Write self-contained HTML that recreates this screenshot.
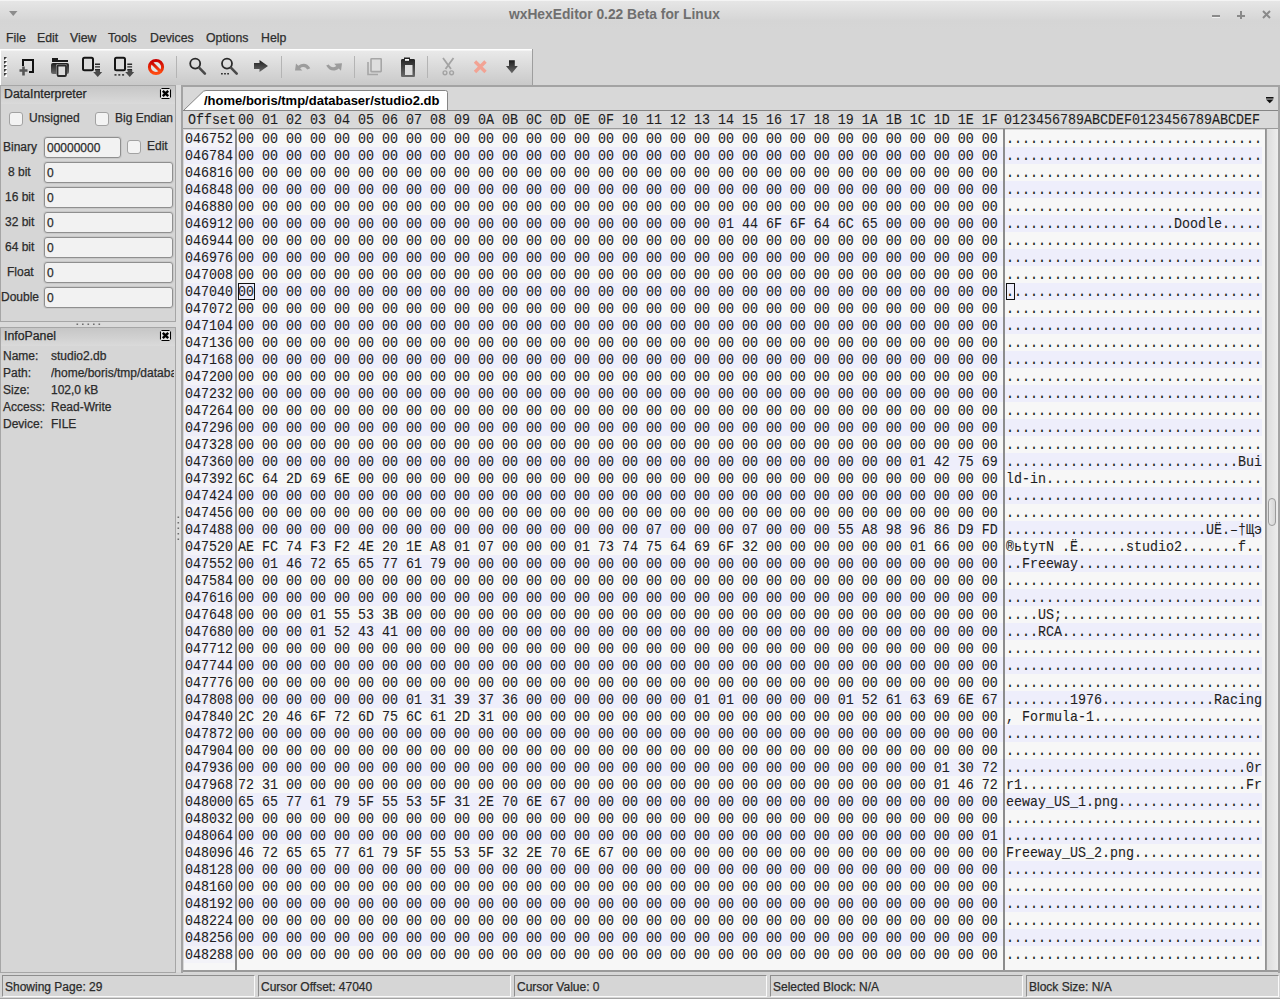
<!DOCTYPE html>
<html><head><meta charset="utf-8"><title>wxHexEditor</title>
<style>
*{margin:0;padding:0;box-sizing:border-box}
html,body{width:1280px;height:999px;overflow:hidden;background:#d6d6d6;font-family:"Liberation Sans",sans-serif;font-size:12px;color:#2b2b2b}
.a{position:absolute}
#title{left:0;top:0;width:1280px;height:29px;background:linear-gradient(#f4f4f4 0,#f4f4f4 1px,#e6e6e6 1px,#d5d5d5 21px,#d6d6d6 29px)}
#title .t{left:509px;top:7px;white-space:nowrap;font-weight:bold;font-size:13.8px;color:#6f6f6f;padding-left:-0px}
#menubar{left:0;top:29px;width:1280px;height:20px}
#menubar span{position:absolute;top:2px;font-size:12.3px;color:#2e2e2e}
#toolbar{left:0;top:49px;width:533px;height:36px;background:linear-gradient(#ffffff 0,#ffffff 1px,#e9e9e9 2px,#cacaca 35px);border-right:1px solid #9e9e9e;border-left:1px solid #ffffff}
.sep{position:absolute;top:7px;width:1px;height:22px;background:#b8b8b8}
/* left panel */
#lp1{left:0;top:85px;width:176px;height:237px;border:1px solid #a6a6a6;background:#d6d6d6}
#hsash{left:0;top:322px;width:176px;height:5px;background:#dadada}
#lp2{left:0;top:327px;width:176px;height:646px;border:1px solid #a6a6a6;background:#d6d6d6}
.ph2{background:linear-gradient(#bdbdbd,#cdcdcd)}
.ph{position:absolute;left:0;width:174px;height:18px;background:linear-gradient(#c6c6c6,#dadada)}
.ph span{position:absolute;left:3px;top:1px;font-size:12.3px;color:#262626}
.cls{position:absolute;width:12px;height:12px;border:1.5px solid #1a1a1a;border-radius:2px;background:#ececec}
.cb{position:absolute;width:14px;height:14px;border:1px solid #a2a2a2;border-radius:3px;background:#f3f3f3}
.lbl{position:absolute;font-size:12px;color:#2b2b2b}
.inp{position:absolute;height:21px;border:1px solid #8f8f8f;border-radius:3px;background:#f2f2f2;box-shadow:0 0 0 1px #c9c9c9}
.inp span{position:absolute;left:2px;top:3px;font-size:12px;color:#2b2b2b}
#sash{left:176px;top:85px;width:6px;height:887px;background:#dcdcdc;border-right:1px solid #9e9e9e}
/* notebook */
#nb{left:181px;top:85px;width:1099px;height:888px;border:2px solid #a3a3a3;border-bottom:0;background:#d8d8d8}
#tab{left:204px;top:90px;width:244px;height:21px;background:#ffffff;border-top:1px solid #8e8e8e;border-right:1px solid #8e8e8e;border-top-right-radius:3px}
#tabtxt{left:204px;top:92.7px;font-weight:bold;font-size:13px;color:#000}
#tabline{left:183px;top:110px;width:1095px;height:1px;background:#858585}
#hdr{left:183px;top:111px;width:1095px;height:18px;background:#d9d9d9;border-bottom:1px solid #9a9a9a}
.mono{font-family:"Liberation Mono",monospace;font-size:13.33px;color:#1e1e1e;white-space:pre;line-height:17px}
#goff{left:184px;top:130px;width:51px;height:841px;background:#f7f7f7;overflow:hidden}
#ghex{left:237px;top:130px;width:767px;height:841px;background:#f7f7f7;overflow:hidden}
#gtxt{left:1005px;top:130px;width:260px;height:841px;background:#f7f7f7;overflow:hidden}
.r{height:17px}
.bgl{position:absolute;left:0;top:0;width:100%}
.txl{position:absolute;left:1px;top:1px;width:100%;height:100%}
.tl{position:absolute;left:0;line-height:15.315px;height:15.315px;transform:scaleY(1.11);transform-origin:0 0;white-space:pre}
.r.alt{background:#eeeefb}
#vsep1{left:235px;top:129px;width:2px;height:841px;background:#8c8c8c}
#vsep2{left:1003px;top:129px;width:2px;height:841px;background:#8c8c8c}
#vsep3{left:1265px;top:129px;width:2px;height:841px;background:linear-gradient(90deg,#8c8c8c,#a4a4a4)}
#gbot{left:183px;top:970px;width:1095px;height:2px;background:#9a9a9a}
#scroll{left:1267px;top:129px;width:11px;height:841px;background:linear-gradient(90deg,#dcdcdc,#ececec)}
#thumb{left:1268px;top:498px;width:8px;height:28px;border:1px solid #9a9a9a;border-radius:4px;background:linear-gradient(90deg,#e8e8e8,#d6d6d6)}
#cur1{left:238px;top:283px;width:17px;height:17px;border:1px solid #111}
#cur2{left:1006px;top:283px;width:9px;height:17px;border:1px solid #111}
/* status */
.sf{position:absolute;top:975px;height:22px;border-top:1px solid #8e8e8e;border-left:1px solid #8e8e8e;border-bottom:1px solid #fafafa;border-right:1px solid #fafafa;background:#d6d6d6}
.sf span{position:absolute;left:2px;top:3.5px;font-size:12px;color:#2b2b2b}

#sbot{left:0;top:998px;width:1280px;height:1px;background:#a3a3a3}

#gtxt .bgl{width:257px}
#goff .r{background:#f3f3f8}
#goff .r.alt{background:#eeeef9}

#menubar span,.lbl,.ph span,.sf span,.inp span{-webkit-text-stroke:0.25px currentColor}

.txl,#hdr span{-webkit-text-stroke:0.1px #1e1e1e}

</style></head><body>
<div id="title" class="a">
 <svg class="a" style="left:9px;top:11px" width="9" height="6"><path d="M0 0h8.5L4.25 5z" fill="#8c8c8c"/></svg>
 <div class="a t">wxHexEditor 0.22 Beta for Linux</div>
 <svg class="a" style="left:1208px;top:8px" width="70" height="14">
  <rect x="4" y="7" width="8" height="2" fill="#8a8a8a"/><rect x="4" y="9" width="8" height="1" fill="#f0f0f0"/>
  <rect x="29" y="7" width="8" height="2" fill="#8a8a8a"/><rect x="32" y="3" width="2" height="8" fill="#8a8a8a"/>
  <path d="M55 3l7 7M62 3l-7 7" stroke="#8a8a8a" stroke-width="2"/>
 </svg>
</div>
<div id="menubar" class="a">
 <span style="left:6px">File</span><span style="left:37px">Edit</span><span style="left:70px">View</span><span style="left:108px">Tools</span><span style="left:150px">Devices</span><span style="left:206px">Options</span><span style="left:261px">Help</span>
</div>
<div id="toolbar" class="a">
 <svg class="a" style="left:-1px;top:0" width="533" height="36" viewBox="0 49 533 36">
 <defs>
  <linearGradient id="gd" x1="0" y1="0" x2="0" y2="1"><stop offset="0" stop-color="#1e1e1e"/><stop offset="1" stop-color="#6a6a6a"/></linearGradient>
  <linearGradient id="gred" x1="0" y1="0" x2="0" y2="1"><stop offset="0" stop-color="#c80000"/><stop offset="1" stop-color="#ff4a10"/></linearGradient>
 </defs>
 <!-- gripper -->
 <g fill="#3a3a3a"><path d="M4 57h3l-3 3z M4 61h3l-3 3z M4 65h3l-3 3z M4 69h3l-3 3z M4 73h3l-3 3z"/></g>
 <g fill="#ffffff"><path d="M7 58v3h-3z M7 62v3h-3z M7 66v3h-3z M7 70v3h-3z M7 74v3h-3z"/></g>
 <!-- new -->
 <path d="M23 66V60h10v12h-4" fill="none" stroke="#111" stroke-width="2"/>
 <path d="M19.5 70.5h8M23.5 66.5v9" stroke="#555" stroke-width="2.6"/>
 <!-- open -->
 <path d="M52 58h6v2h10v2H52z" fill="#1a1a1a"/>
 <rect x="51" y="63" width="18" height="11" rx="2" fill="url(#gd)"/>
 <rect x="56.5" y="64.5" width="10" height="12" fill="#ffffff"/>
 <rect x="57.5" y="65.5" width="8.5" height="10.5" rx="1" fill="#dcdcdc" stroke="#2a2a2a" stroke-width="1.8"/>
 <!-- save -->
 <rect x="83" y="57.8" width="10" height="12.4" rx="1.5" fill="#dcdcdc" stroke="#151515" stroke-width="2"/>
 <path d="M95 64.3h5M95 66.9h5M95 69.8h5" stroke="#2a2a2a" stroke-width="1.4"/>
 <path d="M95.5 70h4.5v2h2.2l-4.45 5l-4.55-5h2.3z" fill="#4a4a4a"/>
 <!-- save as -->
 <rect x="115" y="57.8" width="10" height="12.4" rx="1.5" fill="#dcdcdc" stroke="#151515" stroke-width="2"/>
 <path d="M127.3 64.3h4.8M127.3 66.9h4.8M127.3 69.8h4.8" stroke="#2a2a2a" stroke-width="1.4"/>
 <path d="M127.7 70h4.5v2h2l-4.45 5l-4.55-5h2.5z" fill="#4a4a4a"/>
 <path d="M114.5 74h2v1.8h-2zM118.3 74h2v1.8h-2zM122.1 74h2v1.8h-2z" fill="#444"/>
 <!-- stop -->
 <circle cx="156" cy="67" r="6.6" fill="#dfe6e6" stroke="url(#gred)" stroke-width="3"/>
 <path d="M151.2 62.2l9.6 9.6" stroke="url(#gred)" stroke-width="3"/>
 <!-- seps -->
 <rect x="176" y="56" width="1" height="22" fill="#b4b4b4"/>
 <rect x="281" y="56" width="1" height="22" fill="#b4b4b4"/>
 <rect x="354" y="56" width="1" height="22" fill="#b4b4b4"/>
 <rect x="427" y="56" width="1" height="22" fill="#b4b4b4"/>
 <!-- find -->
 <circle cx="195.2" cy="63.6" r="5" fill="none" stroke="#2a2a2a" stroke-width="1.8"/>
 <path d="M199.3 67.8l5.6 5.8" stroke="#4a4a4a" stroke-width="2.6" stroke-linecap="round"/>
 <!-- find replace -->
 <circle cx="227" cy="63.6" r="5" fill="none" stroke="#2a2a2a" stroke-width="1.8"/>
 <path d="M231.1 67.8l5.6 5.8" stroke="#4a4a4a" stroke-width="2.6" stroke-linecap="round"/>
 <path d="M221 73h1.8v1.6H221zM224.1 73h1.8v1.6h-1.8zM227.2 73h1.8v1.6h-1.8z" fill="#333"/>
 <!-- goto -->
 <path d="M254 63h5.5v-3l8.5 6l-8.5 6v-3H254z" fill="url(#gd)"/>
 <!-- undo -->
 <path d="M295 70.5l1-7l2.3 2.3c4-3.3 9-3 12 2.5l-3 1.2c-2-3-5-3.2-7.2-1.2l2.2 2.2z" fill="#9c9c9c"/>
 <!-- redo -->
 <path d="M342 63.2l-1 7.5l-2.3-2.3c-4 3.3-9 3-12.5-3l2.5-0.8c2.2 3 5.2 3.2 7.6 1.3l-2.1-2.1z" fill="#9c9c9c"/>
 <!-- copy -->
 <path d="M368 62v12.5h10" fill="none" stroke="#a6a6a6" stroke-width="1.6"/>
 <rect x="371" y="58.8" width="10.2" height="12.8" rx="0.5" fill="#dedede" stroke="#a6a6a6" stroke-width="1.6"/>
 <!-- paste -->
 <path d="M401 60.5c0-1 0.6-1.5 1.5-1.5h1.5v-1.5h6v1.5h3.5c1 0 1.5 0.5 1.5 1.5v15c0 1-0.5 1.5-1.5 1.5h-11c-1 0-1.5-0.5-1.5-1.5z" fill="url(#gd)"/>
 <rect x="405" y="59" width="4" height="1.8" fill="#ffffff"/>
 <rect x="405" y="65" width="7.5" height="10" fill="#dedede"/>
 <!-- cut -->
 <path d="M443 58l8 11M453.5 58l-8 11" stroke="#a3a3a3" stroke-width="1.8"/>
 <circle cx="445" cy="72.8" r="1.9" fill="none" stroke="#a3a3a3" stroke-width="1.4"/>
 <circle cx="451.6" cy="72.8" r="1.9" fill="none" stroke="#a3a3a3" stroke-width="1.4"/>
 <!-- delete -->
 <path d="M475 61.5l10.5 10.5M485.5 61.5l-10.5 10.5" stroke="#f2a394" stroke-width="3.4"/>
 <!-- insert -->
 <path d="M509 60.3h5.8v5.6h3l-5.9 7.4l-5.9-7.4h3z" fill="url(#gd)"/>
</svg>

</div>
<div id="lp1" class="a">
 <div class="ph" style="top:0"><span>DataInterpreter</span><svg class="a" style="left:158px;top:1px" width="13" height="13" viewBox="0 0 13 13"><path d="M2.5 1.5h8M2.5 11.5h8M1.5 2.5v8M11.5 2.5v8" stroke="#000" stroke-width="1.1"/><rect x="2" y="2" width="9" height="9" fill="#e4e4e4"/><path d="M3.8 3.8l5.4 5.4M9.2 3.8l-5.4 5.4" stroke="#000" stroke-width="2.4"/></svg></div>
 <div class="cb" style="left:8px;top:26px"></div><div class="lbl" style="left:28px;top:25px">Unsigned</div>
 <div class="cb" style="left:94px;top:26px"></div><div class="lbl" style="left:114px;top:25px">Big Endian</div>
 <div class="lbl" style="left:2px;top:54px">Binary</div>
 <div class="inp" style="left:43px;top:51px;width:77px"><span>00000000</span></div>
 <div class="cb" style="left:126px;top:54px"></div><div class="lbl" style="left:146px;top:53px">Edit</div>
 <div class="lbl" style="left:7px;top:79px">8 bit</div><div class="inp" style="left:43px;top:76px;width:129px"><span>0</span></div>
 <div class="lbl" style="left:4px;top:104px">16 bit</div><div class="inp" style="left:43px;top:101px;width:129px"><span>0</span></div>
 <div class="lbl" style="left:4px;top:129px">32 bit</div><div class="inp" style="left:43px;top:126px;width:129px"><span>0</span></div>
 <div class="lbl" style="left:4px;top:154px">64 bit</div><div class="inp" style="left:43px;top:151px;width:129px"><span>0</span></div>
 <div class="lbl" style="left:6px;top:179px">Float</div><div class="inp" style="left:43px;top:176px;width:129px"><span>0</span></div>
 <div class="lbl" style="left:0px;top:204px">Double</div><div class="inp" style="left:43px;top:201px;width:129px"><span>0</span></div>
</div>
<div id="hsash" class="a"><svg class="a" style="left:76px;top:1px" width="25" height="3"><path d="M0.5 0.5h1.6v1.6H0.5zM6 0.5h1.6v1.6H6zM11.5 0.5h1.6v1.6h-1.6zM17 0.5h1.6v1.6H17zM22.5 0.5h1.6v1.6h-1.6z" fill="#6e6e6e"/></svg></div>
<div id="lp2" class="a">
 <div class="ph ph2" style="top:0"><span>InfoPanel</span><svg class="a" style="left:158px;top:1px" width="13" height="13" viewBox="0 0 13 13"><path d="M2.5 1.5h8M2.5 11.5h8M1.5 2.5v8M11.5 2.5v8" stroke="#000" stroke-width="1.1"/><rect x="2" y="2" width="9" height="9" fill="#e4e4e4"/><path d="M3.8 3.8l5.4 5.4M9.2 3.8l-5.4 5.4" stroke="#000" stroke-width="2.4"/></svg></div>
 <div class="lbl" style="left:2px;top:21px">Name:</div><div class="lbl" style="left:50px;top:21px">studio2.db</div>
 <div class="lbl" style="left:2px;top:38px">Path:</div><div class="lbl" style="left:50px;top:38px;width:123px;overflow:hidden;white-space:nowrap">/home/boris/tmp/databaser/studio2.db</div>
 <div class="lbl" style="left:2px;top:55px">Size:</div><div class="lbl" style="left:50px;top:55px">102,0 kB</div>
 <div class="lbl" style="left:2px;top:72px">Access:</div><div class="lbl" style="left:50px;top:72px">Read-Write</div>
 <div class="lbl" style="left:2px;top:89px">Device:</div><div class="lbl" style="left:50px;top:89px">FILE</div>
</div>
<div id="sash" class="a"><svg class="a" style="left:1px;top:431px" width="3" height="25"><path d="M0.5 0.5h1.6v1.6H0.5zM0.5 6h1.6v1.6H0.5zM0.5 11.5h1.6v1.6H0.5zM0.5 17h1.6v1.6H0.5zM0.5 22.5h1.6v1.6H0.5z" fill="#6e6e6e"/></svg></div>
<div id="nb" class="a"></div>
<svg class="a" style="left:182px;top:88px" width="270" height="24" viewBox="182 88 270 24"><path d="M183.5 110.5L203.5 91.2l2.5-0.7H445.5a2 2 0 0 1 2 2V110.5" fill="#ffffff" stroke="#858585" stroke-width="1"/></svg>
<div id="tabline" class="a"></div>
<div id="tabtxt" class="a">/home/boris/tmp/databaser/studio2.db</div>
<svg class="a" style="left:1265px;top:96px" width="10" height="8" viewBox="0 0 10 8"><rect x="1" y="1" width="7.5" height="1.6" fill="#111"/><path d="M1 3.5h7.5L4.75 7.2z" fill="#111"/></svg>
<div id="hdr" class="a mono"><div class="a" style="left:0;top:1px;line-height:15.315px;transform:scaleY(1.11);transform-origin:0 0;width:1095px"><span class="a" style="left:5px;top:0">Offset</span><span class="a" style="left:55px;top:0">00 01 02 03 04 05 06 07 08 09 0A 0B 0C 0D 0E 0F 10 11 12 13 14 15 16 17 18 19 1A 1B 1C 1D 1E 1F</span><span class="a" style="left:821px;top:0">0123456789ABCDEF0123456789ABCDEF</span></div></div>
<div id="goff" class="a mono"><div class="bgl"><div class="r"></div><div class="r alt"></div><div class="r"></div><div class="r alt"></div><div class="r"></div><div class="r alt"></div><div class="r"></div><div class="r alt"></div><div class="r"></div><div class="r alt"></div><div class="r"></div><div class="r alt"></div><div class="r"></div><div class="r alt"></div><div class="r"></div><div class="r alt"></div><div class="r"></div><div class="r alt"></div><div class="r"></div><div class="r alt"></div><div class="r"></div><div class="r alt"></div><div class="r"></div><div class="r alt"></div><div class="r"></div><div class="r alt"></div><div class="r"></div><div class="r alt"></div><div class="r"></div><div class="r alt"></div><div class="r"></div><div class="r alt"></div><div class="r"></div><div class="r alt"></div><div class="r"></div><div class="r alt"></div><div class="r"></div><div class="r alt"></div><div class="r"></div><div class="r alt"></div><div class="r"></div><div class="r alt"></div><div class="r"></div><div class="r alt"></div><div class="r"></div><div class="r alt"></div><div class="r"></div><div class="r alt"></div><div class="r"></div></div><div class="txl"><div class="tl" style="top:0px">046752</div><div class="tl" style="top:17px">046784</div><div class="tl" style="top:34px">046816</div><div class="tl" style="top:51px">046848</div><div class="tl" style="top:68px">046880</div><div class="tl" style="top:85px">046912</div><div class="tl" style="top:102px">046944</div><div class="tl" style="top:119px">046976</div><div class="tl" style="top:136px">047008</div><div class="tl" style="top:153px">047040</div><div class="tl" style="top:170px">047072</div><div class="tl" style="top:187px">047104</div><div class="tl" style="top:204px">047136</div><div class="tl" style="top:221px">047168</div><div class="tl" style="top:238px">047200</div><div class="tl" style="top:255px">047232</div><div class="tl" style="top:272px">047264</div><div class="tl" style="top:289px">047296</div><div class="tl" style="top:306px">047328</div><div class="tl" style="top:323px">047360</div><div class="tl" style="top:340px">047392</div><div class="tl" style="top:357px">047424</div><div class="tl" style="top:374px">047456</div><div class="tl" style="top:391px">047488</div><div class="tl" style="top:408px">047520</div><div class="tl" style="top:425px">047552</div><div class="tl" style="top:442px">047584</div><div class="tl" style="top:459px">047616</div><div class="tl" style="top:476px">047648</div><div class="tl" style="top:493px">047680</div><div class="tl" style="top:510px">047712</div><div class="tl" style="top:527px">047744</div><div class="tl" style="top:544px">047776</div><div class="tl" style="top:561px">047808</div><div class="tl" style="top:578px">047840</div><div class="tl" style="top:595px">047872</div><div class="tl" style="top:612px">047904</div><div class="tl" style="top:629px">047936</div><div class="tl" style="top:646px">047968</div><div class="tl" style="top:663px">048000</div><div class="tl" style="top:680px">048032</div><div class="tl" style="top:697px">048064</div><div class="tl" style="top:714px">048096</div><div class="tl" style="top:731px">048128</div><div class="tl" style="top:748px">048160</div><div class="tl" style="top:765px">048192</div><div class="tl" style="top:782px">048224</div><div class="tl" style="top:799px">048256</div><div class="tl" style="top:816px">048288</div></div></div>
<div id="ghex" class="a mono"><div class="bgl"><div class="r"></div><div class="r alt"></div><div class="r"></div><div class="r alt"></div><div class="r"></div><div class="r alt"></div><div class="r"></div><div class="r alt"></div><div class="r"></div><div class="r alt"></div><div class="r"></div><div class="r alt"></div><div class="r"></div><div class="r alt"></div><div class="r"></div><div class="r alt"></div><div class="r"></div><div class="r alt"></div><div class="r"></div><div class="r alt"></div><div class="r"></div><div class="r alt"></div><div class="r"></div><div class="r alt"></div><div class="r"></div><div class="r alt"></div><div class="r"></div><div class="r alt"></div><div class="r"></div><div class="r alt"></div><div class="r"></div><div class="r alt"></div><div class="r"></div><div class="r alt"></div><div class="r"></div><div class="r alt"></div><div class="r"></div><div class="r alt"></div><div class="r"></div><div class="r alt"></div><div class="r"></div><div class="r alt"></div><div class="r"></div><div class="r alt"></div><div class="r"></div><div class="r alt"></div><div class="r"></div><div class="r alt"></div><div class="r"></div></div><div class="txl"><div class="tl" style="top:0px">00 00 00 00 00 00 00 00 00 00 00 00 00 00 00 00 00 00 00 00 00 00 00 00 00 00 00 00 00 00 00 00</div><div class="tl" style="top:17px">00 00 00 00 00 00 00 00 00 00 00 00 00 00 00 00 00 00 00 00 00 00 00 00 00 00 00 00 00 00 00 00</div><div class="tl" style="top:34px">00 00 00 00 00 00 00 00 00 00 00 00 00 00 00 00 00 00 00 00 00 00 00 00 00 00 00 00 00 00 00 00</div><div class="tl" style="top:51px">00 00 00 00 00 00 00 00 00 00 00 00 00 00 00 00 00 00 00 00 00 00 00 00 00 00 00 00 00 00 00 00</div><div class="tl" style="top:68px">00 00 00 00 00 00 00 00 00 00 00 00 00 00 00 00 00 00 00 00 00 00 00 00 00 00 00 00 00 00 00 00</div><div class="tl" style="top:85px">00 00 00 00 00 00 00 00 00 00 00 00 00 00 00 00 00 00 00 00 01 44 6F 6F 64 6C 65 00 00 00 00 00</div><div class="tl" style="top:102px">00 00 00 00 00 00 00 00 00 00 00 00 00 00 00 00 00 00 00 00 00 00 00 00 00 00 00 00 00 00 00 00</div><div class="tl" style="top:119px">00 00 00 00 00 00 00 00 00 00 00 00 00 00 00 00 00 00 00 00 00 00 00 00 00 00 00 00 00 00 00 00</div><div class="tl" style="top:136px">00 00 00 00 00 00 00 00 00 00 00 00 00 00 00 00 00 00 00 00 00 00 00 00 00 00 00 00 00 00 00 00</div><div class="tl" style="top:153px">00 00 00 00 00 00 00 00 00 00 00 00 00 00 00 00 00 00 00 00 00 00 00 00 00 00 00 00 00 00 00 00</div><div class="tl" style="top:170px">00 00 00 00 00 00 00 00 00 00 00 00 00 00 00 00 00 00 00 00 00 00 00 00 00 00 00 00 00 00 00 00</div><div class="tl" style="top:187px">00 00 00 00 00 00 00 00 00 00 00 00 00 00 00 00 00 00 00 00 00 00 00 00 00 00 00 00 00 00 00 00</div><div class="tl" style="top:204px">00 00 00 00 00 00 00 00 00 00 00 00 00 00 00 00 00 00 00 00 00 00 00 00 00 00 00 00 00 00 00 00</div><div class="tl" style="top:221px">00 00 00 00 00 00 00 00 00 00 00 00 00 00 00 00 00 00 00 00 00 00 00 00 00 00 00 00 00 00 00 00</div><div class="tl" style="top:238px">00 00 00 00 00 00 00 00 00 00 00 00 00 00 00 00 00 00 00 00 00 00 00 00 00 00 00 00 00 00 00 00</div><div class="tl" style="top:255px">00 00 00 00 00 00 00 00 00 00 00 00 00 00 00 00 00 00 00 00 00 00 00 00 00 00 00 00 00 00 00 00</div><div class="tl" style="top:272px">00 00 00 00 00 00 00 00 00 00 00 00 00 00 00 00 00 00 00 00 00 00 00 00 00 00 00 00 00 00 00 00</div><div class="tl" style="top:289px">00 00 00 00 00 00 00 00 00 00 00 00 00 00 00 00 00 00 00 00 00 00 00 00 00 00 00 00 00 00 00 00</div><div class="tl" style="top:306px">00 00 00 00 00 00 00 00 00 00 00 00 00 00 00 00 00 00 00 00 00 00 00 00 00 00 00 00 00 00 00 00</div><div class="tl" style="top:323px">00 00 00 00 00 00 00 00 00 00 00 00 00 00 00 00 00 00 00 00 00 00 00 00 00 00 00 00 01 42 75 69</div><div class="tl" style="top:340px">6C 64 2D 69 6E 00 00 00 00 00 00 00 00 00 00 00 00 00 00 00 00 00 00 00 00 00 00 00 00 00 00 00</div><div class="tl" style="top:357px">00 00 00 00 00 00 00 00 00 00 00 00 00 00 00 00 00 00 00 00 00 00 00 00 00 00 00 00 00 00 00 00</div><div class="tl" style="top:374px">00 00 00 00 00 00 00 00 00 00 00 00 00 00 00 00 00 00 00 00 00 00 00 00 00 00 00 00 00 00 00 00</div><div class="tl" style="top:391px">00 00 00 00 00 00 00 00 00 00 00 00 00 00 00 00 00 07 00 00 00 07 00 00 00 55 A8 98 96 86 D9 FD</div><div class="tl" style="top:408px">AE FC 74 F3 F2 4E 20 1E A8 01 07 00 00 00 01 73 74 75 64 69 6F 32 00 00 00 00 00 00 01 66 00 00</div><div class="tl" style="top:425px">00 01 46 72 65 65 77 61 79 00 00 00 00 00 00 00 00 00 00 00 00 00 00 00 00 00 00 00 00 00 00 00</div><div class="tl" style="top:442px">00 00 00 00 00 00 00 00 00 00 00 00 00 00 00 00 00 00 00 00 00 00 00 00 00 00 00 00 00 00 00 00</div><div class="tl" style="top:459px">00 00 00 00 00 00 00 00 00 00 00 00 00 00 00 00 00 00 00 00 00 00 00 00 00 00 00 00 00 00 00 00</div><div class="tl" style="top:476px">00 00 00 01 55 53 3B 00 00 00 00 00 00 00 00 00 00 00 00 00 00 00 00 00 00 00 00 00 00 00 00 00</div><div class="tl" style="top:493px">00 00 00 01 52 43 41 00 00 00 00 00 00 00 00 00 00 00 00 00 00 00 00 00 00 00 00 00 00 00 00 00</div><div class="tl" style="top:510px">00 00 00 00 00 00 00 00 00 00 00 00 00 00 00 00 00 00 00 00 00 00 00 00 00 00 00 00 00 00 00 00</div><div class="tl" style="top:527px">00 00 00 00 00 00 00 00 00 00 00 00 00 00 00 00 00 00 00 00 00 00 00 00 00 00 00 00 00 00 00 00</div><div class="tl" style="top:544px">00 00 00 00 00 00 00 00 00 00 00 00 00 00 00 00 00 00 00 00 00 00 00 00 00 00 00 00 00 00 00 00</div><div class="tl" style="top:561px">00 00 00 00 00 00 00 01 31 39 37 36 00 00 00 00 00 00 00 01 01 00 00 00 00 01 52 61 63 69 6E 67</div><div class="tl" style="top:578px">2C 20 46 6F 72 6D 75 6C 61 2D 31 00 00 00 00 00 00 00 00 00 00 00 00 00 00 00 00 00 00 00 00 00</div><div class="tl" style="top:595px">00 00 00 00 00 00 00 00 00 00 00 00 00 00 00 00 00 00 00 00 00 00 00 00 00 00 00 00 00 00 00 00</div><div class="tl" style="top:612px">00 00 00 00 00 00 00 00 00 00 00 00 00 00 00 00 00 00 00 00 00 00 00 00 00 00 00 00 00 00 00 00</div><div class="tl" style="top:629px">00 00 00 00 00 00 00 00 00 00 00 00 00 00 00 00 00 00 00 00 00 00 00 00 00 00 00 00 00 01 30 72</div><div class="tl" style="top:646px">72 31 00 00 00 00 00 00 00 00 00 00 00 00 00 00 00 00 00 00 00 00 00 00 00 00 00 00 00 01 46 72</div><div class="tl" style="top:663px">65 65 77 61 79 5F 55 53 5F 31 2E 70 6E 67 00 00 00 00 00 00 00 00 00 00 00 00 00 00 00 00 00 00</div><div class="tl" style="top:680px">00 00 00 00 00 00 00 00 00 00 00 00 00 00 00 00 00 00 00 00 00 00 00 00 00 00 00 00 00 00 00 00</div><div class="tl" style="top:697px">00 00 00 00 00 00 00 00 00 00 00 00 00 00 00 00 00 00 00 00 00 00 00 00 00 00 00 00 00 00 00 01</div><div class="tl" style="top:714px">46 72 65 65 77 61 79 5F 55 53 5F 32 2E 70 6E 67 00 00 00 00 00 00 00 00 00 00 00 00 00 00 00 00</div><div class="tl" style="top:731px">00 00 00 00 00 00 00 00 00 00 00 00 00 00 00 00 00 00 00 00 00 00 00 00 00 00 00 00 00 00 00 00</div><div class="tl" style="top:748px">00 00 00 00 00 00 00 00 00 00 00 00 00 00 00 00 00 00 00 00 00 00 00 00 00 00 00 00 00 00 00 00</div><div class="tl" style="top:765px">00 00 00 00 00 00 00 00 00 00 00 00 00 00 00 00 00 00 00 00 00 00 00 00 00 00 00 00 00 00 00 00</div><div class="tl" style="top:782px">00 00 00 00 00 00 00 00 00 00 00 00 00 00 00 00 00 00 00 00 00 00 00 00 00 00 00 00 00 00 00 00</div><div class="tl" style="top:799px">00 00 00 00 00 00 00 00 00 00 00 00 00 00 00 00 00 00 00 00 00 00 00 00 00 00 00 00 00 00 00 00</div><div class="tl" style="top:816px">00 00 00 00 00 00 00 00 00 00 00 00 00 00 00 00 00 00 00 00 00 00 00 00 00 00 00 00 00 00 00 00</div></div></div>
<div id="gtxt" class="a mono"><div class="bgl"><div class="r"></div><div class="r alt"></div><div class="r"></div><div class="r alt"></div><div class="r"></div><div class="r alt"></div><div class="r"></div><div class="r alt"></div><div class="r"></div><div class="r alt"></div><div class="r"></div><div class="r alt"></div><div class="r"></div><div class="r alt"></div><div class="r"></div><div class="r alt"></div><div class="r"></div><div class="r alt"></div><div class="r"></div><div class="r alt"></div><div class="r"></div><div class="r alt"></div><div class="r"></div><div class="r alt"></div><div class="r"></div><div class="r alt"></div><div class="r"></div><div class="r alt"></div><div class="r"></div><div class="r alt"></div><div class="r"></div><div class="r alt"></div><div class="r"></div><div class="r alt"></div><div class="r"></div><div class="r alt"></div><div class="r"></div><div class="r alt"></div><div class="r"></div><div class="r alt"></div><div class="r"></div><div class="r alt"></div><div class="r"></div><div class="r alt"></div><div class="r"></div><div class="r alt"></div><div class="r"></div><div class="r alt"></div><div class="r"></div></div><div class="txl"><div class="tl" style="top:0px">................................</div><div class="tl" style="top:17px">................................</div><div class="tl" style="top:34px">................................</div><div class="tl" style="top:51px">................................</div><div class="tl" style="top:68px">................................</div><div class="tl" style="top:85px">.....................Doodle.....</div><div class="tl" style="top:102px">................................</div><div class="tl" style="top:119px">................................</div><div class="tl" style="top:136px">................................</div><div class="tl" style="top:153px">................................</div><div class="tl" style="top:170px">................................</div><div class="tl" style="top:187px">................................</div><div class="tl" style="top:204px">................................</div><div class="tl" style="top:221px">................................</div><div class="tl" style="top:238px">................................</div><div class="tl" style="top:255px">................................</div><div class="tl" style="top:272px">................................</div><div class="tl" style="top:289px">................................</div><div class="tl" style="top:306px">................................</div><div class="tl" style="top:323px">.............................Bui</div><div class="tl" style="top:340px">ld-in...........................</div><div class="tl" style="top:357px">................................</div><div class="tl" style="top:374px">................................</div><div class="tl" style="top:391px">.........................UЁ.–†Щэ</div><div class="tl" style="top:408px">®ьtутN .Ё......studio2.......f..</div><div class="tl" style="top:425px">..Freeway.......................</div><div class="tl" style="top:442px">................................</div><div class="tl" style="top:459px">................................</div><div class="tl" style="top:476px">....US;.........................</div><div class="tl" style="top:493px">....RCA.........................</div><div class="tl" style="top:510px">................................</div><div class="tl" style="top:527px">................................</div><div class="tl" style="top:544px">................................</div><div class="tl" style="top:561px">........1976..............Racing</div><div class="tl" style="top:578px">, Formula-1.....................</div><div class="tl" style="top:595px">................................</div><div class="tl" style="top:612px">................................</div><div class="tl" style="top:629px">..............................0r</div><div class="tl" style="top:646px">r1............................Fr</div><div class="tl" style="top:663px">eeway_US_1.png..................</div><div class="tl" style="top:680px">................................</div><div class="tl" style="top:697px">................................</div><div class="tl" style="top:714px">Freeway_US_2.png................</div><div class="tl" style="top:731px">................................</div><div class="tl" style="top:748px">................................</div><div class="tl" style="top:765px">................................</div><div class="tl" style="top:782px">................................</div><div class="tl" style="top:799px">................................</div><div class="tl" style="top:816px">................................</div></div></div>
<div id="vsep1" class="a"></div>
<div id="vsep2" class="a"></div>
<div id="vsep3" class="a"></div>
<div id="gbot" class="a"></div>
<div id="scroll" class="a"></div>
<div id="thumb" class="a"></div>
<div id="cur1" class="a"></div>
<div id="cur2" class="a"></div>
<div class="sf" style="left:2px;width:253px"><span>Showing Page: 29</span></div>
<div class="sf" style="left:258px;width:253px"><span>Cursor Offset: 47040</span></div>
<div class="sf" style="left:514px;width:253px"><span>Cursor Value: 0</span></div>
<div class="sf" style="left:770px;width:253px"><span>Selected Block: N/A</span></div>
<div class="sf" style="left:1026px;width:253px"><span>Block Size: N/A</span></div>
<div id="sbot" class="a"></div>

</body></html>
